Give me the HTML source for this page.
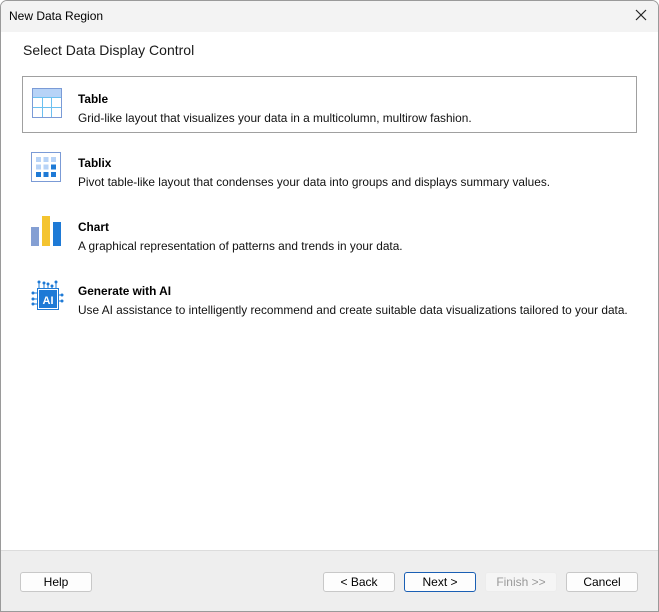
<!DOCTYPE html>
<html><head><meta charset="utf-8"><style>
*{margin:0;padding:0;box-sizing:border-box}
body{width:659px;height:612px;background:#fff;font-family:"Segoe UI","Liberation Sans",sans-serif;font-size:11.85px;color:#000;overflow:hidden;position:relative}
.win{position:absolute;left:0;top:0;width:659px;height:612px;border:1px solid #9a9a9a;border-radius:7px 7px 0 0;overflow:hidden}
.title{position:absolute;left:0;top:0;width:657px;height:31px;background:#f3f3f3}
.title span{position:absolute;left:8px;top:8px;font-size:12px;color:#000}
.close{position:absolute;right:10px;top:7px}
.head{position:absolute;left:22px;top:41px;font-size:14px;color:#1a1a1a}
.item{position:absolute;left:21px;width:615px;height:57px}
.item.sel{border:1px solid #a0a0a0}
.item svg{position:absolute;left:8px;top:10px}
.item b{position:absolute;left:55px;top:15px;font-weight:bold;font-size:11.85px}
.item p{position:absolute;left:55px;top:34px;font-size:11.85px;color:#111}
.item:not(.sel) b{left:56px;top:16px}
.item:not(.sel) p{left:56px;top:35px}
.item:not(.sel) svg{left:9px;top:11px}
.foot{position:absolute;left:0;top:549px;width:657px;height:62px;background:#eeeeee;border-top:1px solid #dcdcdc}
.btn{position:absolute;top:21px;width:72px;height:20px;border:1px solid #c8c8c8;border-radius:3px;background:#fdfdfd;text-align:center;line-height:18px;font-size:12px}
.btn.def{border:1px solid #1a5fb4}
.btn.dis{background:#f5f5f5;border-color:#ececec;color:#999}
</style></head><body><div class="win">
<div class="title"><span>New Data Region</span>
<svg class="close" width="14" height="14" viewBox="0 0 14 14"><path d="M2 2L12 12M12 2L2 12" stroke="#222" stroke-width="1.2"/></svg></div>
<div class="head">Select Data Display Control</div>

<div class="item sel" style="top:75px">
<svg width="32" height="32" viewBox="0 0 32 32"><rect x="1.5" y="1.5" width="29" height="29" fill="#fff" stroke="#7b9bd6"/><rect x="2" y="2" width="28" height="8" fill="#b7d3f7"/><path d="M2 10.5H30M2 20.5H30M11.5 10V30M20.5 10V30" stroke="#6cc0f0"/></svg>
<b>Table</b><p>Grid-like layout that visualizes your data in a multicolumn, multirow fashion.</p></div>

<div class="item" style="top:139px">
<svg width="32" height="32" viewBox="0 0 32 32"><rect x="0.5" y="1.5" width="29" height="29" fill="#fff" stroke="#7b9bd6"/><g fill="#b7d3f7"><rect x="5" y="6" width="5" height="5"/><rect x="12.5" y="6" width="5" height="5"/><rect x="20" y="6" width="5" height="5"/><rect x="5" y="13.5" width="5" height="5"/><rect x="12.5" y="13.5" width="5" height="5"/></g><g fill="#1e7ad6"><rect x="20" y="13.5" width="5" height="5"/><rect x="5" y="21" width="5" height="5"/><rect x="12.5" y="21" width="5" height="5"/><rect x="20" y="21" width="5" height="5"/></g></svg>
<b>Tablix</b><p>Pivot table-like layout that condenses your data into groups and displays summary values.</p></div>

<div class="item" style="top:203px">
<svg width="32" height="32" viewBox="0 0 32 32"><rect x="0" y="12" width="8" height="19" fill="#849fd3"/><rect x="11" y="1" width="8" height="30" fill="#f4c430"/><rect x="22" y="7" width="8" height="24" fill="#1e7ad6"/></svg>
<b>Chart</b><p>A graphical representation of patterns and trends in your data.</p></div>

<div class="item" style="top:267px">
<svg width="34" height="34" viewBox="0 0 34 34"><g stroke="#1e7ad6" stroke-width="1" fill="#1e7ad6"><path d="M8 9V3M13 9V4M17 9V5M21 9V7M25 9V3M2 14H6M2 20H6M2 25H6M28 16H31M28 22H31"/><circle cx="8" cy="3" r="1"/><circle cx="13" cy="4" r="1"/><circle cx="17" cy="5" r="1"/><circle cx="21" cy="7" r="1"/><circle cx="25" cy="3" r="1"/><circle cx="2" cy="14" r="1"/><circle cx="2" cy="20" r="1"/><circle cx="2" cy="25" r="1"/><circle cx="31" cy="16" r="1"/><circle cx="31" cy="22" r="1"/></g><rect x="6.5" y="9.5" width="21" height="21" fill="#fff" stroke="#1e7ad6"/><rect x="8" y="11" width="18" height="18" fill="#1e7ad6"/><text x="17" y="25" font-family="Liberation Sans" font-weight="bold" font-size="11" fill="#fff" text-anchor="middle">AI</text></svg>
<b>Generate with AI</b><p>Use AI assistance to intelligently recommend and create suitable data visualizations tailored to your data.</p></div>

<div class="foot">
<div class="btn" style="left:19px">Help</div>
<div class="btn" style="left:322px">&lt; Back</div>
<div class="btn def" style="left:403px">Next &gt;</div>
<div class="btn dis" style="left:484px">Finish &gt;&gt;</div>
<div class="btn" style="left:565px">Cancel</div>
</div>
</div></body></html>
